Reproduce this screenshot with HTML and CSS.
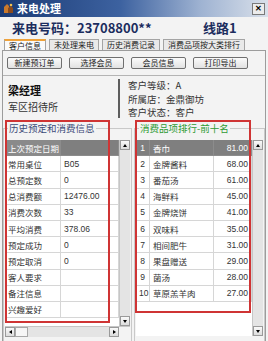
FILE: index.html
```html
<!DOCTYPE html>
<html lang="zh-CN">
<head>
<meta charset="UTF-8">
<meta name="viewport" content="width=device-width, initial-scale=1.0">
<title>来电处理</title>
<link rel="stylesheet" href="styles.css">
</head>
<body>

<div class="window">
  <div class="titlebar">
    <svg class="app-icon" width="11" height="11" viewBox="0 0 11 11">
      <path d="M1 10 L1 4 L4 1 L6 3 L6 10 Z" fill="#c9792c"/>
      <path d="M5 10 L5 5 L8 3 L10 5 L10 10 Z" fill="#8a4a1c"/>
      <circle cx="8" cy="2" r="1.3" fill="#f2c14e"/>
    </svg>
    <span class="title">来电处理</span>
    <span class="close">✕</span>
  </div>

  <div class="phone">
    <span class="phone-no">来电号码：23708800**</span>
    <span class="line-no">线路1</span>
  </div>

  <div class="tabs">
    <span class="tab active">客户信息</span>
    <span class="tab">未处理来电</span>
    <span class="tab">历史消费记录</span>
    <span class="tab">消费品项按大类排行</span>
  </div>

  <div class="panel">
    <div class="toolbar">
      <button class="btn">新建预订单</button>
      <button class="btn">选择会员</button>
      <button class="btn">会员信息</button>
      <button class="btn">打印导出</button>
    </div>

    <div class="info">
      <div class="contact">
        <div class="name">梁经理</div>
        <div class="company">军区招待所</div>
      </div>
      <div class="status">
        <div>客户等级：A</div>
        <div>所属店：金鼎御坊</div>
        <div>客户状态：客户</div>
      </div>
    </div>

    <div class="groups">
      <!-- 历史预定 -->
      <div class="group left">
        <div class="group-title">历史预定和消费信息</div>
        <div class="grid-frame">
          <div class="grid-body">
            <div class="grid-area">
              <table class="grid history">
                <tr class="sel"><td class="label">上次预定日期</td><td></td></tr>
                <tr><td class="label">常用桌位</td><td>B05</td></tr>
                <tr><td class="label">总预定数</td><td>0</td></tr>
                <tr><td class="label">总消费额</td><td>12476.00</td></tr>
                <tr><td class="label">消费次数</td><td>33</td></tr>
                <tr><td class="label">平均消费</td><td>378.06</td></tr>
                <tr><td class="label">预定成功</td><td>0</td></tr>
                <tr><td class="label">预定取消</td><td>0</td></tr>
                <tr><td class="label">客人要求</td><td></td></tr>
                <tr><td class="label">备注信息</td><td></td></tr>
                <tr><td class="label">兴趣爱好</td><td></td></tr>
              </table>
            </div>
            <div class="vscroll">
              <span class="arrow"><i class="tri up"></i></span>
              <span class="track"></span>
              <span class="arrow"><i class="tri down"></i></span>
            </div>
          </div>
          <div class="hscroll">
            <span class="arrow"><i class="tri lt"></i></span>
            <span class="thumb"></span>
            <span class="track"></span>
            <span class="arrow"><i class="tri rt"></i></span>
            <span class="corner"></span>
          </div>
        </div>
      </div>

      <!-- 排行 -->
      <div class="group right">
        <div class="group-title green">消费品项排行-前十名</div>
        <div class="grid-frame">
          <div class="grid-body tall">
            <div class="grid-area">
              <table class="grid ranking">
                <tr class="sel"><td class="num">1</td><td>香巾</td><td class="amt">81.00</td></tr>
                <tr><td class="num">2</td><td>金牌酱料</td><td class="amt">68.00</td></tr>
                <tr><td class="num">3</td><td>番茄汤</td><td class="amt">61.00</td></tr>
                <tr><td class="num">4</td><td>海鲜料</td><td class="amt">45.00</td></tr>
                <tr><td class="num">5</td><td>金牌烧饼</td><td class="amt">41.00</td></tr>
                <tr><td class="num">6</td><td>双味料</td><td class="amt">35.00</td></tr>
                <tr><td class="num">7</td><td>相间肥牛</td><td class="amt">31.00</td></tr>
                <tr><td class="num">8</td><td>果盘赠送</td><td class="amt">29.00</td></tr>
                <tr><td class="num">9</td><td>菌汤</td><td class="amt">28.00</td></tr>
                <tr><td class="num">10</td><td>草原羔羊肉</td><td class="amt">27.00</td></tr>
              </table>
            </div>
            <div class="vscroll">
              <span class="arrow"><i class="tri up"></i></span>
              <span class="track"></span>
              <span class="arrow"><i class="tri down"></i></span>
            </div>
          </div>
        </div>
      </div>

      <!-- red annotation boxes -->
      <div class="mark mark-left"></div>
      <div class="mark mark-right"></div>
    </div>
  </div>
</div>

</body>
</html>
```

FILE: styles.css
```css
body {
  margin: 0;
  font-family: "Liberation Sans", "Noto Sans CJK SC", sans-serif;
  background: #fff;
}
.window {
  width: 268px;
  height: 341px;
  background: #f3f3f3;
  display: flex;
  flex-direction: column;
  overflow: hidden;
}

/* title bar */
.titlebar {
  height: 17px;
  flex: none;
  display: flex;
  align-items: center;
  padding: 0 3px;
  background: linear-gradient(to right, #1a3a74, #3d62a0 45%, #9fb3d2 75%, #d9e0ea);
}
.app-icon {
  margin-right: 3px;
}
.title {
  color: #fff;
  font-family: "Noto Sans CJK SC", sans-serif;
  font-weight: bold;
  font-size: 11px;
  line-height: 17px;
}
.close {
  margin-left: auto;
  width: 11px;
  height: 10px;
  border: 1px solid #7a7a7a;
  background: #ececec;
  font-size: 8px;
  line-height: 10px;
  font-weight: bold;
  text-align: center;
  color: #000;
}

/* phone line */
.phone {
  height: 21px;
  flex: none;
  display: grid;
  grid-template-columns: 191px auto;
  align-items: center;
  padding-left: 12px;
  font-family: "Noto Sans CJK SC", sans-serif;
  font-weight: bold;
  font-size: 13px;
  color: #1c2d5e;
}

/* tabs */
.tabs {
  flex: none;
  display: flex;
  gap: 3px;
  padding: 1px 0 0 4px;
  height: 11px;
}
.tab {
  height: 10px;
  padding: 0 4px;
  border: 1px solid #a4a4a4;
  border-bottom: none;
  background: #e9e9e9;
  font-family: "Noto Sans CJK SC", sans-serif;
  font-size: 8px;
  line-height: 10px;
  color: #222;
}
.tab.active {
  background: #fafafa;
  border-top: 2px solid #efa23a;
  height: 9px;
  line-height: 9px;
}

/* main panel */
.panel {
  flex: 1;
  margin: 0 2px;
  border: 1px solid #9c9c9c;
  border-bottom: none;
  display: flex;
  flex-direction: column;
}
.toolbar {
  display: flex;
  gap: 7px;
  padding: 6px 0 0 4px;
  height: 12px;
}
.btn {
  width: 55px;
  height: 12px;
  padding: 0;
  border: 1px solid #6f6f6f;
  border-radius: 2px;
  background: linear-gradient(#fbfbfb, #e2e2e2);
  font-family: "Noto Sans CJK SC", sans-serif;
  font-size: 8px;
  line-height: 10px;
  color: #222;
  cursor: pointer;
}

.info {
  margin-top: 6px;
  height: 44px;
  border-top: 1px solid #b4b4b4;
  display: flex;
  font-family: "Noto Sans CJK SC", sans-serif;
  color: #333;
}
.contact {
  width: 110px;
  padding: 5px 0 0 5px;
  border-right: 2px solid #5d5d5d;
  margin: 3px 0 2px 0;
}
.name {
  font-weight: bold;
  font-size: 11px;
  line-height: 13px;
  color: #111;
}
.company {
  font-size: 10px;
  line-height: 14px;
  margin-top: 3px;
}
.status {
  padding: 3px 0 0 8px;
  font-size: 9.5px;
  line-height: 13.5px;
}

/* group boxes */
.groups {
  position: relative;
  flex: 1;
  display: flex;
  gap: 2px;
  min-height: 0;
}
.group {
  margin-top: 8px;
  border: 1px solid #c9c9c9;
  border-bottom: none;
  padding: 0 1px;
  display: flex;
  flex-direction: column;
}
.group.left {
  width: 125px;
}
.group.right {
  width: 127px;
}
.group-title {
  margin: -7px 0 0 3px;
  padding: 0 1px;
  width: fit-content;
  background: #f3f3f3;
  font-family: "Noto Sans CJK SC", sans-serif;
  font-size: 9.5px;
  line-height: 13px;
  color: #3b4a78;
}
.group-title.green {
  color: #2f9a34;
}
.grid-frame {
  margin-top: 5px;
  display: flex;
  flex-direction: column;
}
.grid-body {
  display: flex;
  height: 186px;
}
.grid-body.tall {
  height: 196px;
}
.grid-area {
  flex: 1;
  background: #fff;
}

/* tables */
.grid {
  width: 100%;
  border-collapse: collapse;
  font-size: 8.5px;
  color: #333;
  table-layout: fixed;
}
.grid td {
  height: 15.2px;
  padding: 0 3px;
  border: 1px solid #d6d6d6;
  white-space: nowrap;
  overflow: hidden;
  font-family: "Liberation Sans", "Noto Sans CJK SC", sans-serif;
}
.grid tr:first-child td {
  border-top: none;
}
.grid td:first-child {
  border-left: none;
}
.history td.label {
  width: 49px;
  font-family: "Noto Sans CJK SC", sans-serif;
}
.grid tr.sel td {
  background: #7f7f7f;
  color: #fff;
  border-color: #8c8c8c;
}
.history tr.sel td.label {
  background: #8a8a8a;
}
.ranking td.num {
  width: 7px;
  text-align: center;
}
.ranking td:nth-child(2) {
  width: 57px;
  font-family: "Noto Sans CJK SC", sans-serif;
}
.ranking td.amt {
  text-align: right;
}

/* scrollbars */
.vscroll {
  width: 10px;
  display: flex;
  flex-direction: column;
  background: #e4e4e4;
  border-left: 1px solid #c6c6c6;
}
.vscroll .track {
  flex: 1;
}
.hscroll {
  height: 10px;
  display: flex;
  background: #e4e4e4;
  border-top: 1px solid #c6c6c6;
}
.hscroll .track {
  flex: 1;
}
.arrow {
  width: 8px;
  height: 8px;
  flex: none;
  border: 1px solid #9a9a9a;
  background: linear-gradient(#fafafa, #dcdcdc);
  display: flex;
  align-items: center;
  justify-content: center;
}
.thumb {
  width: 11px;
  border: 1px solid #a8a8a8;
  background: #f6f6f6;
}
.corner {
  width: 11px;
  background: #f3f3f3;
}
.tri {
  width: 0;
  height: 0;
  border: 2px solid transparent;
}
.tri.up {
  border-bottom: 3px solid #000;
  border-top: none;
}
.tri.down {
  border-top: 3px solid #000;
  border-bottom: none;
}
.tri.lt {
  border-right: 3px solid #000;
  border-left: none;
}
.tri.rt {
  border-left: 3px solid #000;
  border-right: none;
}

/* red annotation rectangles */
.mark {
  position: absolute;
  top: 0;
  box-sizing: border-box;
  border: 2px solid #cf3434;
}
.mark-left {
  left: 2px;
  width: 105px;
  height: 203px;
}
.mark-right {
  left: 132px;
  width: 116px;
  height: 193px;
}
```
